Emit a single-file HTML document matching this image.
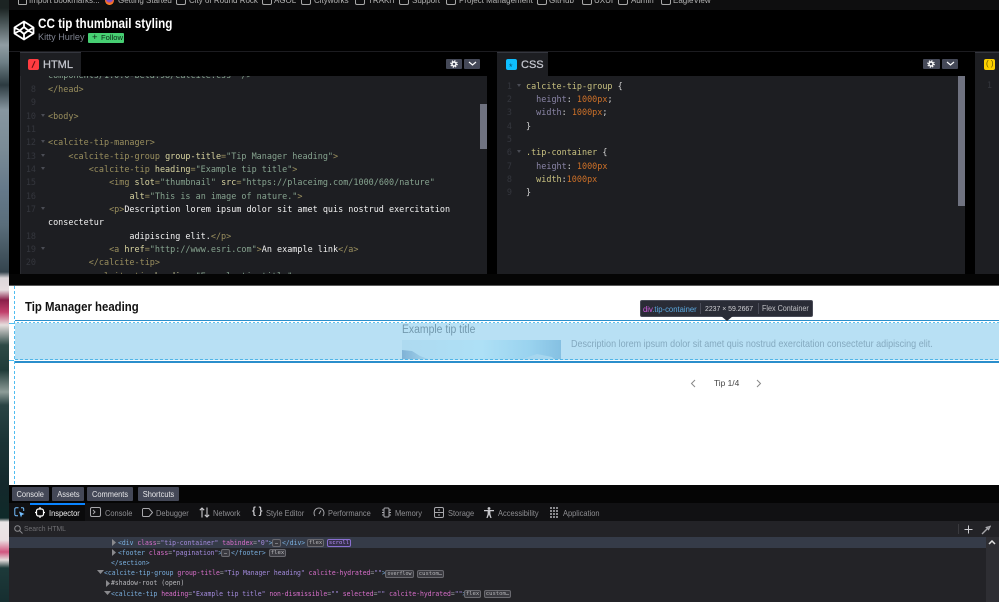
<!DOCTYPE html>
<html><head><meta charset="utf-8"><title>CC tip thumbnail styling</title>
<style>
html,body{margin:0;padding:0;background:#000}
#r{position:relative;width:999px;height:602px;overflow:hidden;background:#000;font-family:"Liberation Sans",sans-serif;filter:blur(.35px)}
#r div,#r svg{position:absolute}
.t{position:absolute;white-space:pre;line-height:14px;height:14px}
.x{transform:scaleX(.9);transform-origin:0 0}
.c{font-family:"DejaVu Sans Mono","Liberation Mono",monospace;font-size:8.46px;color:#d8d8d8}
.n{font-family:"DejaVu Sans Mono","Liberation Mono",monospace;font-size:8.46px;color:#34363d;text-align:right;width:20px}
.g{color:#9a8f5e}.a{color:#d8d4a0}.s{color:#86a38f}.w{color:#f2f2f2}
.p{color:#8a85a6}.v{color:#cc7028}.l{color:#c8c180}.o{color:#d4d4d4}
.bm{font-size:8px;color:#b4b4b4}
.f{width:8px;height:7px;top:-4px;border:1px solid #a8a8a8;border-radius:2px}
.btn{background:#444857;border-radius:1px;height:10px;top:59px}
.tb{font-size:8.3px;color:#8e8e92;transform:scaleX(.9);transform-origin:0 0}
.dv{font-family:"DejaVu Sans Mono","Liberation Mono",monospace;font-size:7.13px;color:#9a9aa0;transform:scaleX(.9);transform-origin:0 0}
.dt{color:#7ab0e0}.da{color:#d96fcb}.dq{color:#a58cdf}
.bd{font-family:"DejaVu Sans Mono","Liberation Mono",monospace;font-size:5.6px;color:#b5b5b8;background:#3a3a40;border:1px solid #6a6a70;border-radius:2px;height:6px;line-height:6px;text-align:center;box-sizing:content-box}
.tabb{background:#444857;color:#e6e6e8;font-size:8.3px;height:14px;top:487px;line-height:14px;text-align:center;border-radius:1px}
.tabb span{display:inline-block;transform:scaleX(.9)}
.fa{width:0;height:0;border-left:2px solid transparent;border-right:2px solid transparent;border-top:3px solid #4a4c54}
</style></head><body>
<div id="r">

<!-- left photo strip -->
<div style="left:0;top:0;width:9px;height:602px;background:linear-gradient(180deg,#1c2423 0,#1c2423 8px,#3f4b4c 20px,#909da3 45px,#6e7f86 62px,#2c3a40 85px,#8796a0 110px,#7a8b96 150px,#65798a 190px,#5a6e7c 225px,#42535e 255px,#34444e 272px,#dcd6da 278px,#e6dde0 290px,#8a1f4a 300px,#c23f6c 312px,#e5dedd 325px,#2e4a46 345px,#1f3b38 370px,#8d9c98 392px,#2a4444 405px,#1b3436 440px,#14282b 485px,#0f2a2a 518px,#e9e6e6 522px,#eadfe2 540px,#d2557f 552px,#e4dcdc 560px,#1d3a3a 568px,#162e30 602px)"></div>

<!-- bookmarks bar -->
<div style="left:9px;top:0;width:990px;height:10px;background:#0e0e0f;overflow:hidden">
 <div class="f" style="left:9px;border-radius:1px;width:7px"></div>
 <span class="t bm" style="left:20px;top:-6px">Import bookmarks...</span>
 <div style="left:96px;top:-4px;width:9px;height:9px;border-radius:50%;background:radial-gradient(circle at 50% 30%,#7a4fd0 0 35%,#ff6a1f 60%,#ffb52b 100%)"></div>
 <span class="t bm" style="left:109px;top:-6px">Getting Started</span>
 <div class="f" style="left:167px"></div><span class="t bm" style="left:180px;top:-6px">City of Round Rock</span>
 <div class="f" style="left:253px"></div><span class="t bm" style="left:265px;top:-6px">AGOL</span>
 <div class="f" style="left:292px"></div><span class="t bm" style="left:305px;top:-6px">Cityworks</span>
 <div class="f" style="left:346px"></div><span class="t bm" style="left:359px;top:-6px">TRAKiT</span>
 <div class="f" style="left:390px"></div><span class="t bm" style="left:403px;top:-6px">Support</span>
 <div class="f" style="left:437px"></div><span class="t bm" style="left:450px;top:-6px">Project Management</span>
 <div class="f" style="left:528px"></div><span class="t bm" style="left:540px;top:-6px">GitHub</span>
 <div class="f" style="left:573px"></div><span class="t bm" style="left:585px;top:-6px">UXUI</span>
 <div class="f" style="left:609px"></div><span class="t bm" style="left:622px;top:-6px">Admin</span>
 <div class="f" style="left:652px"></div><span class="t bm" style="left:664px;top:-6px">EagleView</span>
</div>

<!-- codepen header -->
<svg style="left:13px;top:20px" width="22" height="21" viewBox="0 0 22 21" fill="none" stroke="#fff" stroke-width="1.8" stroke-linejoin="round"><path d="M11 1.5 20.5 7.5V13.5L11 19.5 1.5 13.5V7.5ZM11 1.5V7L6.8 10.5 11 14V19.5M11 7 15.2 10.5 11 14M1.5 7.5 6.8 10.5 1.5 13.5M20.5 7.5 15.2 10.5 20.5 13.5"/></svg>
<span class="t" style="left:38px;top:17px;font-size:13.6px;font-weight:bold;color:#fff;transform:scaleX(.86);transform-origin:0 0">CC tip thumbnail styling</span>
<span class="t" style="left:38px;top:30px;font-size:9.1px;color:#7f8390">Kitty Hurley</span>
<div style="left:88px;top:33px;width:36px;height:10px;background:#47cf73;border-radius:1px"></div>
<span class="t" style="left:92px;top:31px;font-size:9.5px;color:#0c2616">+</span>
<span class="t" style="left:101px;top:31px;font-size:7.6px;color:#0c2616">Follow</span>

<!-- editors background -->
<div style="left:9px;top:51px;width:990px;height:1px;background:#1c1c20"></div>
<div style="left:20px;top:76px;width:467px;height:198px;background:#1d1e22"></div>
<div style="left:20px;top:52px;width:61px;height:24px;background:#1d1e22;border-top:1px solid #34363e;box-sizing:border-box"></div>
<div style="left:497px;top:76px;width:468px;height:198px;background:#1d1e22"></div>
<div style="left:497px;top:52px;width:51px;height:24px;background:#1d1e22;border-top:1px solid #34363e;box-sizing:border-box"></div>
<div style="left:975px;top:52px;width:24px;height:222px;background:#1d1e22;border-top:1px solid #34363e;box-sizing:border-box"></div>
<div style="left:20px;top:76px;width:1px;height:198px;background:#2a2b30"></div>

<!-- tab heads -->
<div style="left:28px;top:59px;width:11px;height:11px;background:#ff3c41;border-radius:2px"></div>
<svg style="left:28px;top:59px" width="11" height="11"><path d="M7 2.2 4 8.8" stroke="#6a0d10" stroke-width="1.1" fill="none"/></svg>
<span class="t" style="left:43px;top:58px;font-size:11px;color:#c4c6ce;-webkit-text-stroke:.25px #c4c6ce">HTML</span>
<div style="left:506px;top:59px;width:11px;height:11px;background:#0ebeff;border-radius:2px"></div>
<span class="t" style="left:509px;top:60px;font-size:9px;color:#06506e">*</span>
<span class="t" style="left:521px;top:58px;font-size:11px;color:#c4c6ce;-webkit-text-stroke:.25px #c4c6ce">CSS</span>
<div style="left:984px;top:59px;width:11px;height:11px;background:#fcd000;border-radius:2px"></div>
<span class="t" style="left:986px;top:57px;font-size:8px;color:#6a5700">( )</span>

<div class="btn" style="left:446px;width:16px"></div><div class="btn" style="left:464px;width:16px"></div>
<div class="btn" style="left:923px;width:17px"></div><div class="btn" style="left:942px;width:16px"></div>
<svg style="left:450px;top:60px" width="8" height="8"><circle cx="4" cy="4" r="2" fill="none" stroke="#fff" stroke-width="1.4"/><circle cx="4" cy="4" r="3.2" fill="none" stroke="#fff" stroke-width="1.2" stroke-dasharray="1.2 1.3"/></svg>
<svg style="left:927px;top:60px" width="8" height="8"><circle cx="4" cy="4" r="2" fill="none" stroke="#fff" stroke-width="1.4"/><circle cx="4" cy="4" r="3.2" fill="none" stroke="#fff" stroke-width="1.2" stroke-dasharray="1.2 1.3"/></svg>
<svg style="left:468px;top:61px" width="9" height="6"><path d="M1 1 4.5 4 8 1" fill="none" stroke="#fff" stroke-width="1.2"/></svg>
<svg style="left:946px;top:61px" width="9" height="6"><path d="M1 1 4.5 4 8 1" fill="none" stroke="#fff" stroke-width="1.2"/></svg>

<!-- HTML code -->
<div style="left:20px;top:76px;width:460px;height:198px;overflow:hidden">
 <span class="t c s" style="left:28px;top:-8px">components/1.0.0-beta.98/calcite.css" /&gt;</span>
 <span class="t n" style="left:-4px;top:6px">8</span><span class="t c g" style="left:28px;top:6px">&lt;/head&gt;</span>
 <span class="t n" style="left:-4px;top:19px">9</span>
 <span class="t n" style="left:-4px;top:33px">10</span><div class="fa" style="left:21px;top:38px"></div><span class="t c g" style="left:28px;top:33px">&lt;body&gt;</span>
 <span class="t n" style="left:-4px;top:46px">11</span>
 <span class="t n" style="left:-4px;top:59px">12</span><div class="fa" style="left:21px;top:64px"></div><span class="t c g" style="left:28px;top:59px">&lt;calcite-tip-manager&gt;</span>
 <span class="t n" style="left:-4px;top:73px">13</span><div class="fa" style="left:21px;top:78px"></div><span class="t c g" style="left:28px;top:73px">    &lt;calcite-tip-group <span class="a">group-title</span>=<span class="s">"Tip Manager heading"</span>&gt;</span>
 <span class="t n" style="left:-4px;top:86px">14</span><div class="fa" style="left:21px;top:91px"></div><span class="t c g" style="left:28px;top:86px">        &lt;calcite-tip <span class="a">heading</span>=<span class="s">"Example tip title"</span>&gt;</span>
 <span class="t n" style="left:-4px;top:99px">15</span><span class="t c g" style="left:28px;top:99px">            &lt;img <span class="a">slot</span>=<span class="s">"thumbnail"</span> <span class="a">src</span>=<span class="s">"https://placeimg.com/1000/600/nature"</span></span>
 <span class="t n" style="left:-4px;top:113px">16</span><span class="t c g" style="left:28px;top:113px">                <span class="a">alt</span>=<span class="s">"This is an image of nature."</span>&gt;</span>
 <span class="t n" style="left:-4px;top:126px">17</span><div class="fa" style="left:21px;top:131px"></div><span class="t c g" style="left:28px;top:126px">            &lt;p&gt;<span class="w">Description lorem ipsum dolor sit amet quis nostrud exercitation</span></span>
 <span class="t c w" style="left:28px;top:139px">consectetur</span>
 <span class="t n" style="left:-4px;top:153px">18</span><span class="t c g" style="left:28px;top:153px"><span class="w">                adipiscing elit.</span>&lt;/p&gt;</span>
 <span class="t n" style="left:-4px;top:166px">19</span><div class="fa" style="left:21px;top:171px"></div><span class="t c g" style="left:28px;top:166px">            &lt;a <span class="a">href</span>=<span class="s">"http://www.esri.com"</span>&gt;<span class="w">An example link</span>&lt;/a&gt;</span>
 <span class="t n" style="left:-4px;top:179px">20</span><span class="t c g" style="left:28px;top:179px">        &lt;/calcite-tip&gt;</span>
 <span class="t c g" style="left:28px;top:193px">        &lt;calcite-tip <span class="a">heading</span>=<span class="s">"Example tip title"</span>&gt;</span>
</div>
<div style="left:480px;top:104px;width:7px;height:45px;background:#6f7280"></div>

<!-- CSS code -->
<div style="left:497px;top:76px;width:461px;height:198px;overflow:hidden">
 <span class="t n" style="left:-5px;top:3px">1</span><div class="fa" style="left:20px;top:8px"></div><span class="t c l" style="left:29px;top:3px">calcite-tip-group <span class="o">{</span></span>
 <span class="t n" style="left:-5px;top:16px">2</span><span class="t c p" style="left:29px;top:16px">  height<span class="o">:</span> <span class="v">1000px</span><span class="o">;</span></span>
 <span class="t n" style="left:-5px;top:29px">3</span><span class="t c p" style="left:29px;top:29px">  width<span class="o">:</span> <span class="v">1000px</span><span class="o">;</span></span>
 <span class="t n" style="left:-5px;top:43px">4</span><span class="t c o" style="left:29px;top:43px">}</span>
 <span class="t n" style="left:-5px;top:56px">5</span>
 <span class="t n" style="left:-5px;top:69px">6</span><div class="fa" style="left:20px;top:74px"></div><span class="t c l" style="left:29px;top:69px">.tip-container <span class="o">{</span></span>
 <span class="t n" style="left:-5px;top:83px">7</span><span class="t c p" style="left:29px;top:83px">  height<span class="o">:</span> <span class="v">1000px</span></span>
 <span class="t n" style="left:-5px;top:96px">8</span><span class="t c l" style="left:29px;top:96px">  width<span class="o">:</span><span class="v">1000px</span></span>
 <span class="t n" style="left:-5px;top:109px">9</span><span class="t c o" style="left:29px;top:109px">}</span>
</div>
<div style="left:958px;top:76px;width:7px;height:130px;background:#6f7280"></div>
<span class="t n" style="left:972px;top:78px">1</span>

<!-- preview -->
<div style="left:9px;top:274px;width:990px;height:11px;background:#050505"></div>
<div style="left:9px;top:285px;width:990px;height:1px;background:#5a5a5a"></div>
<div style="left:9px;top:286px;width:990px;height:199px;background:#fff"></div>
<div style="left:14px;top:286px;width:1px;height:199px;background:repeating-linear-gradient(180deg,#4fbdf0 0 3px,transparent 3px 5px)"></div>
<div style="left:9px;top:323px;width:5px;height:1px;background:#4fbdf0"></div>
<div style="left:9px;top:360px;width:5px;height:1px;background:#4fbdf0"></div>
<span class="t x" style="left:25px;top:299.5px;font-size:12.67px;font-weight:bold;color:#111">Tip Manager heading</span>

<div style="left:15px;top:320px;width:984px;height:42px;background:#b8e0f4"></div>
<div style="left:15px;top:320px;width:984px;height:1px;background:#2b8ecb"></div>
<div style="left:15px;top:321px;width:984px;height:1px;background:#fff"></div>
<div style="left:15px;top:322px;width:984px;height:1px;background:repeating-linear-gradient(90deg,#fff 0 2px,#5ec2ee 2px 4px)"></div>
<div style="left:15px;top:359px;width:984px;height:1px;background:repeating-linear-gradient(90deg,#4fb5e8 0 3px,#b8e0f4 3px 5px)"></div>
<div style="left:15px;top:360px;width:984px;height:1px;background:#fff"></div>
<div style="left:15px;top:361px;width:984px;height:1.5px;background:#2b8ecb"></div>

<span class="t x" style="left:402px;top:322.5px;font-size:11.55px;color:#7399ae">Example tip title</span>
<svg style="left:402px;top:340px" width="159" height="19" viewBox="0 0 159 19">
 <defs><linearGradient id="tg" x1="0" x2="1" y1="0" y2="0"><stop offset="0" stop-color="#aedaf0"/><stop offset=".5" stop-color="#aee0f6"/><stop offset=".8" stop-color="#9ad3ef"/><stop offset="1" stop-color="#85c0e2"/></linearGradient>
 <linearGradient id="tm" x1="0" x2="1" y1="0" y2="0"><stop offset="0" stop-color="#7fb2d6"/><stop offset="1" stop-color="#a4d4ec"/></linearGradient></defs>
 <rect width="159" height="19" fill="url(#tg)"/>
 <path d="M0 10 10 11 18 16 26 19H0Z" fill="url(#tm)"/>
 <path d="M120 19 135 14 150 17 152 19Z" fill="#a6d6ee"/>
</svg>
<span class="t x" style="left:571px;top:338px;font-size:10.03px;color:#84a9bf">Description lorem ipsum dolor sit amet quis nostrud exercitation consectetur adipiscing elit.</span>

<!-- inspector tooltip -->
<div style="left:640px;top:300px;width:173px;height:17px;background:#2a2c36;border:1px solid #4a4c58;box-sizing:border-box;border-radius:2px"></div>
<svg style="left:721px;top:316px" width="12" height="5"><path d="M0 0H12L6 5Z" fill="#2a2c36"/></svg>
<span class="t x" style="left:643px;top:301.5px;font-size:8.55px;color:#5aa9e0"><span style="color:#d25ce0">div</span>.tip-container</span>
<div style="left:700px;top:303px;width:1px;height:11px;background:#4a4c58"></div>
<span class="t x" style="left:705px;top:301.5px;font-size:7.67px;color:#d0d0d4">2237 × 59.2667</span>
<div style="left:758px;top:303px;width:1px;height:11px;background:#4a4c58"></div>
<span class="t x" style="left:762px;top:301.5px;font-size:8px;color:#c0c0c4">Flex Container</span>

<svg style="left:690px;top:379px" width="7" height="9"><path d="M5 1 1.5 4.5 5 8" fill="none" stroke="#888" stroke-width="1"/></svg>
<svg style="left:755px;top:379px" width="7" height="9"><path d="M2 1 5.5 4.5 2 8" fill="none" stroke="#888" stroke-width="1"/></svg>
<span class="t" style="left:714px;top:376px;font-size:8.4px;color:#444">Tip 1/4</span>

<!-- pen footer -->
<div style="left:9px;top:485px;width:990px;height:18px;background:#050505"></div>
<div class="tabb" style="left:12px;width:37px"><span>Console</span></div>
<div class="tabb" style="left:52px;width:32px"><span>Assets</span></div>
<div class="tabb" style="left:87px;width:46px"><span>Comments</span></div>
<div class="tabb" style="left:138px;width:41px"><span>Shortcuts</span></div>

<!-- devtools toolbar -->
<div style="left:9px;top:503px;width:990px;height:18px;background:#111113"></div>
<div style="left:30px;top:503px;width:55px;height:18px;background:#0a0a0b"></div>
<div style="left:30px;top:503px;width:55px;height:1.5px;background:#0a84ff"></div>
<svg style="left:14px;top:507px" width="11" height="11" fill="none" stroke="#75bfff" stroke-width="1"><path d="M4.5 .8H2A1.2 1.2 0 0 0 .8 2V7.5A1.2 1.2 0 0 0 2 8.7H4M7 .8H8.5A1.2 1.2 0 0 1 9.7 2V4"/><path d="M5 4.5 10.5 7 8 8 7 10.5Z" fill="#75bfff" stroke="none"/></svg>
<svg style="left:35px;top:507px" width="10" height="11" fill="none" stroke="#fff" stroke-width="1.2"><rect x="1.5" y="2" width="7" height="7" rx="2"/><path d="M5 0V2M5 9V11M0 5.5H1.5M8.5 5.5H10"/></svg>
<span class="t tb" style="left:49px;top:506px;color:#f0f0f2">Inspector</span>
<svg style="left:90px;top:507px" width="11" height="10" fill="none" stroke="#a8a8ac" stroke-width="1"><rect x=".5" y=".5" width="10" height="9" rx="1.5"/><path d="M3 3 5 5 3 7"/></svg>
<span class="t tb" style="left:105px;top:506px">Console</span>
<svg style="left:142px;top:508px" width="11" height="9" fill="none" stroke="#a8a8ac" stroke-width="1"><path d="M.5 1.5A1 1 0 0 1 1.5 .5H7L10.5 4.5 7 8.5H1.5A1 1 0 0 1 .5 7.5Z"/></svg>
<span class="t tb" style="left:156px;top:506px">Debugger</span>
<svg style="left:199px;top:507px" width="11" height="11" fill="none" stroke="#c8c8cc" stroke-width="1.1"><path d="M3 10.5V1M.8 3.2 3 1 5.2 3.2M8 .5V10M5.8 7.8 8 10 10.2 7.8"/></svg>
<span class="t tb" style="left:213px;top:506px">Network</span>
<span class="t" style="left:252px;top:505px;font-size:10px;font-weight:bold;color:#c8c8cc">{ }</span>
<span class="t tb" style="left:266px;top:506px">Style Editor</span>
<svg style="left:313px;top:507px" width="12" height="10" fill="none" stroke="#a8a8ac" stroke-width="1"><path d="M2 9A5 5 0 1 1 10 9M6 7 8 3.5"/></svg>
<span class="t tb" style="left:328px;top:506px">Performance</span>
<svg style="left:381px;top:507px" width="11" height="11" fill="none" stroke="#a8a8ac" stroke-width="1"><rect x="3" y="1" width="5" height="9" rx="1"/><path d="M1 3H3M1 5.5H3M1 8H3M8 3H10M8 5.5H10M8 8H10"/></svg>
<span class="t tb" style="left:395px;top:506px">Memory</span>
<svg style="left:434px;top:507px" width="10" height="11" fill="none" stroke="#a8a8ac" stroke-width="1"><rect x=".5" y=".5" width="9" height="10" rx="1.5"/><path d="M.5 5.5H9.5M4 3H6M4 8H6"/></svg>
<span class="t tb" style="left:448px;top:506px">Storage</span>
<svg style="left:484px;top:507px" width="10" height="11" fill="#c8c8cc"><circle cx="5" cy="1.5" r="1.4"/><path d="M0 3H10V4.2H6.4V7L7.6 11H6.4L5 7.6 3.6 11H2.4L3.6 7V4.2H0Z"/></svg>
<span class="t tb" style="left:498px;top:506px">Accessibility</span>
<svg style="left:550px;top:507px" width="10" height="11" fill="#8a8a8e"><path d="M0 0h2v2H0zM3 0h2v2H3zM6 0h2v2H6zM0 3h2v2H0zM3 3h2v2H3zM6 3h2v2H6zM0 6h2v2H0zM3 6h2v2H3zM6 6h2v2H6zM0 9h2v2H0zM3 9h2v2H3zM6 9h2v2H6z"/></svg>
<span class="t tb" style="left:563px;top:506px">Application</span>

<!-- devtools body -->
<div style="left:9px;top:521px;width:990px;height:81px;background:#232327"></div>
<svg style="left:14px;top:525px" width="9" height="9" fill="none" stroke="#8a8a8e" stroke-width="1"><circle cx="3.5" cy="3.5" r="2.8"/><path d="M5.5 5.5 8.5 8.5"/></svg>
<span class="t x" style="left:24px;top:522px;font-size:7.55px;color:#6e6e72">Search HTML</span>
<div style="left:958px;top:524px;width:1px;height:10px;background:#3a3a3e"></div>
<svg style="left:964px;top:525px" width="9" height="9" stroke="#d0d0d4" stroke-width="1"><path d="M4.5 .5V8.5M.5 4.5H8.5"/></svg>
<svg style="left:981px;top:525px" width="10" height="10" fill="none" stroke="#a8a8ac" stroke-width="1.4"><path d="M1 9 6 4M5.5 2.5 7.5 4.5 9 1.5Z"/></svg>

<div style="left:9px;top:537px;width:977px;height:11px;background:#353b48"></div>
<div style="left:986px;top:537px;width:13px;height:65px;background:#2e2e33"></div>
<svg style="left:988px;top:540px" width="8" height="5"><path d="M1 4 4 1 7 4" fill="none" stroke="#e0e0e0" stroke-width="1.5"/></svg>

<svg style="left:112px;top:539px" width="5" height="7"><path d="M0 0 4 3.5 0 7Z" fill="#8a8a8e"/></svg>
<span class="t dv" style="left:118px;top:535.5px"><span class="dt">&lt;div</span> <span class="da">class</span>=<span class="dq">"tip-container"</span> <span class="da">tabindex</span>=<span class="dq">"0"</span><span class="dt">&gt;</span></span>
<div class="bd" style="left:272px;top:539px;width:7px">…</div>
<span class="t dv" style="left:282px;top:535.5px"><span class="dt">&lt;/div&gt;</span></span>
<div class="bd" style="left:307px;top:539px;width:15px">flex</div>
<div class="bd" style="left:327px;top:539px;width:22px;color:#b98eff;border-color:#8a6fd0;background:#35304a">scroll</div>

<svg style="left:112px;top:549px" width="5" height="7"><path d="M0 0 4 3.5 0 7Z" fill="#8a8a8e"/></svg>
<span class="t dv" style="left:118px;top:545.5px"><span class="dt">&lt;footer</span> <span class="da">class</span>=<span class="dq">"pagination"</span><span class="dt">&gt;</span></span>
<div class="bd" style="left:221px;top:549px;width:7px">…</div>
<span class="t dv" style="left:231px;top:545.5px"><span class="dt">&lt;/footer&gt;</span></span>
<div class="bd" style="left:269px;top:549px;width:15px">flex</div>

<span class="t dv" style="left:111px;top:556px"><span class="dt">&lt;/section&gt;</span></span>

<svg style="left:97px;top:570px" width="7" height="5"><path d="M0 0H7L3.5 4Z" fill="#8a8a8e"/></svg>
<span class="t dv" style="left:104px;top:566px"><span class="dt">&lt;calcite-tip-group</span> <span class="da">group-title</span>=<span class="dq">"Tip Manager heading"</span> <span class="da">calcite-hydrated</span>=<span class="dq">""</span><span class="dt">&gt;</span></span>
<div class="bd" style="left:385px;top:570px;width:27px;font-size:5px">overflow</div>
<div class="bd" style="left:417px;top:570px;width:25px">custom…</div>

<svg style="left:106px;top:580px" width="5" height="7"><path d="M0 0 4 3.5 0 7Z" fill="#8a8a8e"/></svg>
<span class="t dv" style="left:111px;top:576px;color:#b8b8bc">#shadow-root (open)</span>

<svg style="left:104px;top:591px" width="7" height="5"><path d="M0 0H7L3.5 4Z" fill="#8a8a8e"/></svg>
<span class="t dv" style="left:111px;top:586.5px"><span class="dt">&lt;calcite-tip</span> <span class="da">heading</span>=<span class="dq">"Example tip title"</span> <span class="da">non-dismissible</span>=<span class="dq">""</span> <span class="da">selected</span>=<span class="dq">""</span> <span class="da">calcite-hydrated</span>=<span class="dq">""</span><span class="dt">&gt;</span></span>
<div class="bd" style="left:464px;top:590px;width:15px">flex</div>
<div class="bd" style="left:484px;top:590px;width:25px">custom…</div>

</div>
</body></html>
